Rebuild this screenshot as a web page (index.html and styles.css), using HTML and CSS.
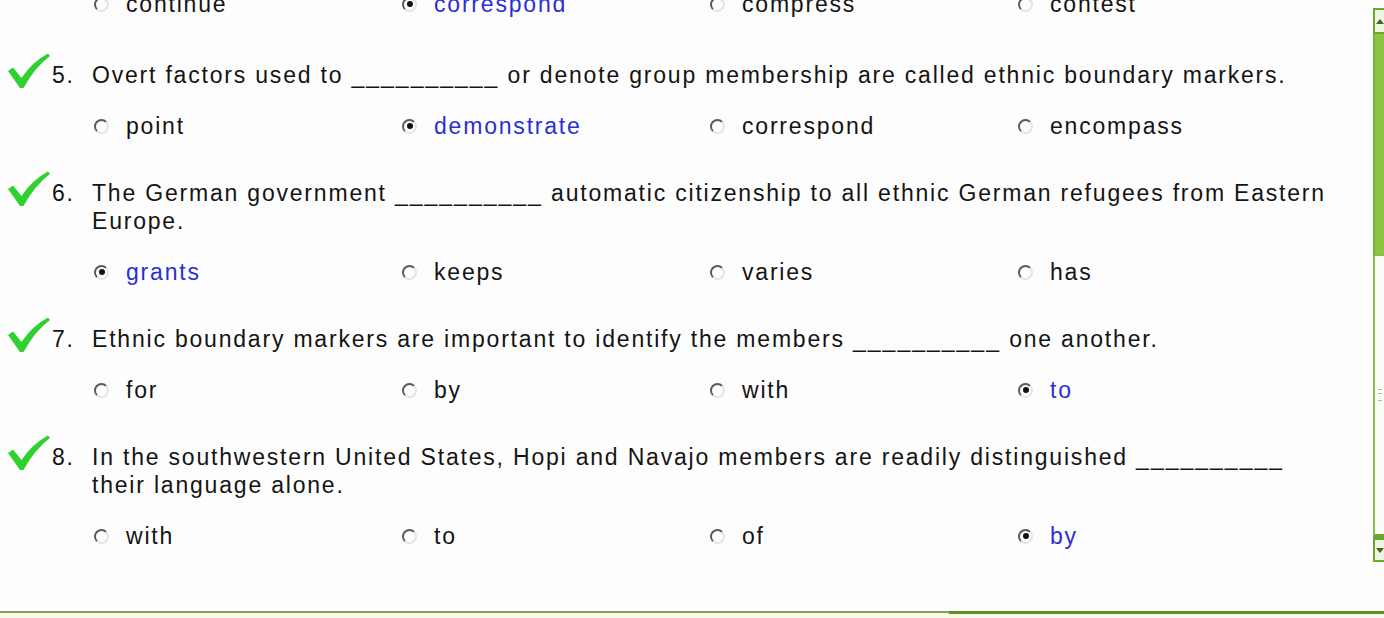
FILE: index.html
```html
<!DOCTYPE html>
<html>
<head>
<meta charset="utf-8">
<link rel="stylesheet" href="styles.css">
</head>
<body>
<div class="page">
  <div class="main">
    <div class="list">
      <div class="opts first">
        <div class="opt"><span class="radio"></span><span>continue</span></div>
        <div class="opt sel"><span class="radio on"></span><span>correspond</span></div>
        <div class="opt"><span class="radio"></span><span>compress</span></div>
        <div class="opt"><span class="radio"></span><span>contest</span></div>
      </div>

      <div class="q">
        <svg class="check" viewBox="0 0 44 36"><path d="M1 18 L6 14.5 L14.5 25 Q25 9 41 0.5 L43 3 Q28 14 16.5 35 L13 35 Z"/></svg>
        <span class="num">5.</span>
        <p class="text">Overt factors used to <span class="blank">__________</span> or denote group membership are called ethnic boundary markers.</p>
      </div>
      <div class="opts">
        <div class="opt"><span class="radio"></span><span>point</span></div>
        <div class="opt sel"><span class="radio on"></span><span>demonstrate</span></div>
        <div class="opt"><span class="radio"></span><span>correspond</span></div>
        <div class="opt"><span class="radio"></span><span>encompass</span></div>
      </div>

      <div class="q">
        <svg class="check" viewBox="0 0 44 36"><path d="M1 18 L6 14.5 L14.5 25 Q25 9 41 0.5 L43 3 Q28 14 16.5 35 L13 35 Z"/></svg>
        <span class="num">6.</span>
        <p class="text">The German government <span class="blank">__________</span> automatic citizenship to all ethnic German refugees from Eastern<br>Europe.</p>
      </div>
      <div class="opts">
        <div class="opt sel"><span class="radio on"></span><span>grants</span></div>
        <div class="opt"><span class="radio"></span><span>keeps</span></div>
        <div class="opt"><span class="radio"></span><span>varies</span></div>
        <div class="opt"><span class="radio"></span><span>has</span></div>
      </div>

      <div class="q">
        <svg class="check" viewBox="0 0 44 36"><path d="M1 18 L6 14.5 L14.5 25 Q25 9 41 0.5 L43 3 Q28 14 16.5 35 L13 35 Z"/></svg>
        <span class="num">7.</span>
        <p class="text">Ethnic boundary markers are important to identify the members <span class="blank">__________</span> one another.</p>
      </div>
      <div class="opts">
        <div class="opt"><span class="radio"></span><span>for</span></div>
        <div class="opt"><span class="radio"></span><span>by</span></div>
        <div class="opt"><span class="radio"></span><span>with</span></div>
        <div class="opt sel"><span class="radio on"></span><span>to</span></div>
      </div>

      <div class="q">
        <svg class="check" viewBox="0 0 44 36"><path d="M1 18 L6 14.5 L14.5 25 Q25 9 41 0.5 L43 3 Q28 14 16.5 35 L13 35 Z"/></svg>
        <span class="num">8.</span>
        <p class="text">In the southwestern United States, Hopi and Navajo members are readily distinguished <span class="blank">__________</span><br>their language alone.</p>
      </div>
      <div class="opts">
        <div class="opt"><span class="radio"></span><span>with</span></div>
        <div class="opt"><span class="radio"></span><span>to</span></div>
        <div class="opt"><span class="radio"></span><span>of</span></div>
        <div class="opt sel"><span class="radio on"></span><span>by</span></div>
      </div>
    </div>

    <div class="scrollbar">
      <div class="sb-btn"><span class="tri up"></span></div>
      <div class="sb-track"></div>
      <div class="sb-thumb"><span class="grip"></span></div>
      <div class="sb-btn down"><span class="tri dn"></span></div>
    </div>
  </div>
  <div class="footer">
    <div class="fl-left"></div>
    <div class="fl-right"></div>
  </div>
</div>
</body>
</html>
```

FILE: styles.css
```css
html, body {
  margin: 0;
  padding: 0;
  background: #fdfdfd;
}
.page {
  width: 1384px;
  height: 618px;
  overflow: hidden;
  display: flex;
  flex-direction: column;
  font-family: "Liberation Sans", Arial, sans-serif;
  font-size: 23px;
  letter-spacing: 1.8px;
  color: #141414;
}
.main {
  height: 611px;
  display: flex;
  overflow: hidden;
}
.list {
  flex: 1;
  overflow: hidden;
}
.q {
  display: flex;
  align-items: flex-start;
  margin-top: 39px;
}
.check {
  width: 44px;
  height: 36px;
  margin-left: 7px;
  margin-top: -8px;
  flex: none;
  fill: #2ed12e;
}
.num {
  width: 40px;
  margin-left: 1px;
  line-height: 28px;
  flex: none;
}
.text {
  margin: 0;
  line-height: 28px;
}
.blank {
  letter-spacing: 2px;
}
.opts {
  display: flex;
  margin-top: 23px;
  margin-left: 92px;
  line-height: 28px;
}
.opts.first {
  margin-top: -10px;
  padding-bottom: 4px;
}
.opt {
  width: 308px;
  display: flex;
  align-items: center;
  flex: none;
}
.opt.sel {
  color: #2e2ed2;
}
.radio {
  width: 11px;
  height: 11px;
  margin-left: 2px;
  margin-right: 17px;
  border-radius: 50%;
  border: 2px solid;
  border-color: #5a5a5a #e4e4e4 #e4e4e4 #5a5a5a;
  position: relative;
  flex: none;
}
.radio.on::after {
  content: "";
  position: absolute;
  left: 2.5px;
  top: 2.5px;
  width: 6px;
  height: 6px;
  border-radius: 50%;
  background: #111;
}
.scrollbar {
  width: 11px;
  margin-top: 8px;
  height: 554px;
  display: flex;
  flex-direction: column;
  flex: none;
}
.sb-btn {
  height: 22px;
  border: 2px solid #6aa82e;
  border-right: none;
  background: #eef6e2;
  display: flex;
  align-items: center;
  justify-content: center;
  flex: none;
}
.sb-btn.down {
  height: 20px;
}
.tri {
  width: 0;
  height: 0;
  border-left: 4px solid transparent;
  border-right: 4px solid transparent;
}
.tri.up {
  border-bottom: 5px solid #3d6a18;
}
.tri.dn {
  border-top: 5px solid #3d6a18;
}
.sb-track {
  height: 220px;
  background: #8cc641;
  border-left: 2px solid #78b238;
  flex: none;
}
.sb-thumb {
  flex: 1;
  background: #fbfdf7;
  border-left: 2px solid #84bd48;
  border-top: 2px solid #84bd48;
  border-bottom: 4px solid #6aa82e;
  display: flex;
  align-items: center;
  justify-content: center;
}
.grip {
  width: 4px;
  height: 10px;
  border-top: 1px solid #a8cf80;
  border-bottom: 1px solid #a8cf80;
  background: linear-gradient(#fbfdf7 0 3px, #a8cf80 3px 4px, #fbfdf7 4px);
}
.footer {
  display: flex;
  align-items: flex-start;
  height: 7px;
  background: #f6f9e6;
}
.fl-left {
  width: 949px;
  height: 2px;
  background: #8a9a58;
}
.fl-right {
  flex: 1;
  height: 3px;
  background: #5f8f28;
}
```
